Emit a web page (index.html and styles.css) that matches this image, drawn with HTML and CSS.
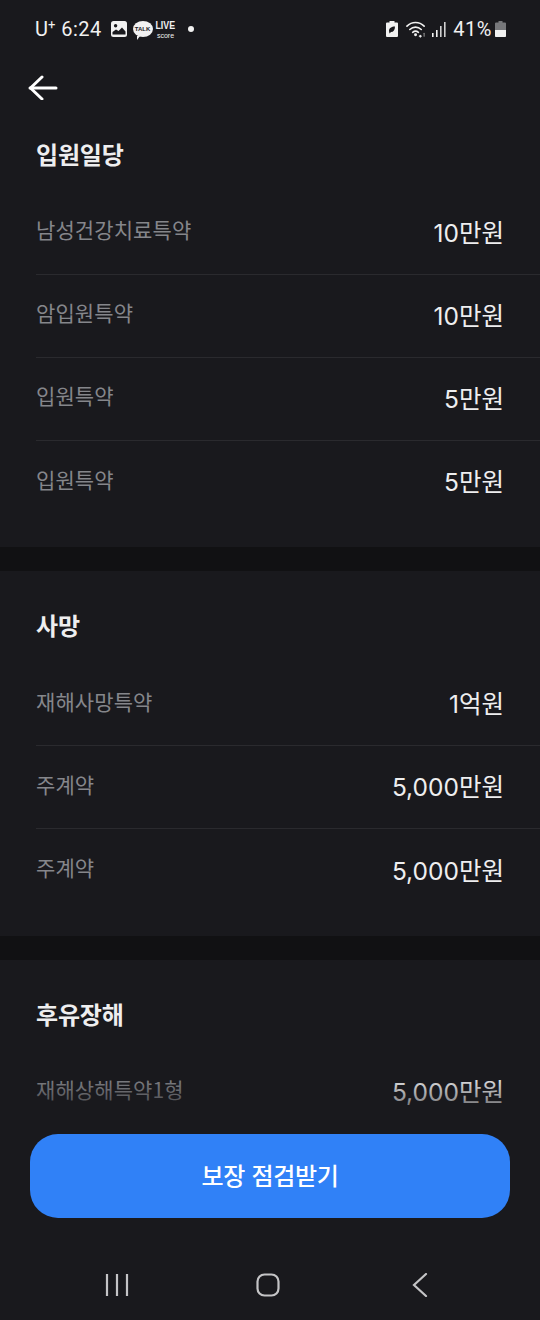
FILE: index.html
```html
<!DOCTYPE html>
<html lang="ko">
<head>
<meta charset="utf-8">
<title>보장 내역</title>
<link rel="stylesheet" href="styles.css">
</head>
<body>
<div class="phone">
  <header class="status">
    <div class="status-left">
      <span class="carrier">U<sup>+</sup></span>
      <span class="time">6:24</span>
      <svg class="ic-gallery" viewBox="0 0 16 16"><rect x="0" y="0" width="16" height="16" rx="2.5" fill="#f1f1f1"/><circle cx="4.6" cy="4.8" r="1.7" fill="#19191d"/><path d="M1.5 13.5V11l3.5-2.5 2.5 1.5L11 6.5l3.5 4v3z" fill="#19191d"/></svg>
      <span class="talk">TALK</span>
      <span class="live"><b>LIVE</b><i>score</i></span>
      <span class="dot"></span>
    </div>
    <div class="status-right">
      <svg class="ic-saver" viewBox="0 0 12 16"><path d="M3.5 0h5v1.5H11a1 1 0 0 1 1 1V15a1 1 0 0 1-1 1H1a1 1 0 0 1-1-1V2.500a1 1 0 0 1 1-1h2.500z" fill="#f1f1f1"/><path d="M3 10c0-3 2.500-4.500 6-4.500 0 3.500-1.500 5.500-4 5.500L3.500 12.500z" fill="#19191d"/></svg>
      <svg class="ic-wifi" viewBox="0 0 22 18" fill="none" stroke="#f1f1f1" stroke-width="1.700" stroke-linecap="round"><path d="M1 6c5-5 13-5 18 0"/><path d="M4 9.500c3.500-3.300 8.500-3.300 12 0"/><path d="M7 12.500c2-1.700 4-1.700 6 0"/><circle cx="10" cy="15" r=".7" fill="#f1f1f1"/><path d="M15 15.500v2M14 16.500h2" stroke-width="1.200"/><path d="M19 13.500v3" stroke="#888" stroke-width="1.200"/></svg>
      <svg class="ic-signal" viewBox="0 0 14 15"><rect x="0" y="11" width="1.600" height="4" fill="#f1f1f1"/><rect x="4" y="8" width="1.600" height="7" fill="#f1f1f1"/><rect x="8" y="4" width="1.600" height="11" fill="#d0d0d0"/><rect x="12" y="0" width="1.600" height="15" fill="#d0d0d0"/></svg>
      <span class="pct">41%</span>
      <svg class="ic-batt" viewBox="0 0 11 16"><path d="M3.500 0h4v1.500H10a1 1 0 0 1 1 1V15a1 1 0 0 1-1 1H1a1 1 0 0 1-1-1V2.500a1 1 0 0 1 1-1h2.500z" fill="#77787b"/><path d="M0 9h11v6a1 1 0 0 1-1 1H1a1 1 0 0 1-1-1z" fill="#f1f1f1"/></svg>
    </div>
  </header>

  <nav class="topbar">
    <svg class="ic-back" viewBox="0 0 30 26" fill="none" stroke="#fff" stroke-width="3" stroke-linecap="round" stroke-linejoin="round"><path d="M2 13h26"/><path d="M14 2 2.500 13 14 24"/></svg>
  </nav>

  <main class="content">
    <section class="group">
      <h2 class="group-title">입원일당</h2>
      <div class="row"><span class="label">남성건강치료특약</span><span class="value">10만원</span></div>
      <div class="row"><span class="label">암입원특약</span><span class="value">10만원</span></div>
      <div class="row"><span class="label">입원특약</span><span class="value">5만원</span></div>
      <div class="row"><span class="label">입원특약</span><span class="value">5만원</span></div>
    </section>
    <section class="group group-mid">
      <h2 class="group-title">사망</h2>
      <div class="row"><span class="label">재해사망특약</span><span class="value">1억원</span></div>
      <div class="row"><span class="label">주계약</span><span class="value">5,000만원</span></div>
      <div class="row"><span class="label">주계약</span><span class="value">5,000만원</span></div>
    </section>
    <section class="group group-last">
      <h2 class="group-title">후유장해</h2>
      <div class="row"><span class="label">재해상해특약1형</span><span class="value">5,000만원</span></div>
    </section>
  </main>

  <footer class="bottom">
    <button class="cta" type="button">보장 점검받기</button>
    <div class="softkeys">
      <svg class="key-recent" viewBox="0 0 24 24" fill="none" stroke="#c4c4c6" stroke-width="2.200"><path d="M2 1v22M12 1v22M22 1v22"/></svg>
      <svg class="key-home" viewBox="0 0 24 24" fill="none" stroke="#c4c4c6" stroke-width="2.200"><rect x="1.500" y="1.500" width="21" height="21" rx="7"/></svg>
      <svg class="key-back" viewBox="0 0 16 24" fill="none" stroke="#c4c4c6" stroke-width="2.200" stroke-linecap="round"><path d="M14 1 2 12l12 11"/></svg>
    </div>
  </footer>
</div>
</body>
</html>
```
FILE: styles.css
```css
* { box-sizing: border-box; }
html, body { margin: 0; padding: 0; }
body {
  background: #19191d;
  font-family: "Noto Sans CJK KR", "Inter", sans-serif;
  color: #fff;
}
.phone {
  position: relative;
  width: 540px;
  height: 1320px;
  overflow: hidden;
  background: #111113;
}

/* status bar */
.status {
  height: 60px;
  background: #19191d;
  display: flex;
  justify-content: space-between;
  align-items: center;
  padding: 0 34px 2px 35px;
  color: #f1f1f1;
  font-family: "Roboto", sans-serif;
  font-size: 20px;
}
.status-left, .status-right { display: flex; align-items: center; }
.carrier { font-size: 20px; line-height: 1; }
.carrier sup { font-size: 13px; line-height: 0; vertical-align: 7px; }
.time { margin-left: 6px; letter-spacing: .4px; }
.ic-gallery { width: 16px; height: 16px; margin-left: 9px; }
.talk {
  position: relative;
  margin-left: 6px;
  width: 20px;
  height: 16px;
  border-radius: 50%;
  background: #f1f1f1;
  color: #19191d;
  font: 700 6px/16px "Liberation Sans", sans-serif;
  text-align: center;
}
.talk::after {
  content: "";
  position: absolute;
  left: 4px;
  bottom: -3px;
  border-left: 3px solid #f1f1f1;
  border-bottom: 4px solid transparent;
}
.live {
  margin-left: 3px;
  width: 20px;
  display: flex;
  flex-direction: column;
  align-items: center;
  font-family: "Liberation Sans", sans-serif;
  line-height: 1;
}
.live b { font-size: 11px; height: 13px; line-height: 13px; transform: scaleX(.8); }
.live i { font-size: 7px; font-style: normal; height: 8px; line-height: 8px; }
.dot { width: 6px; height: 6px; border-radius: 50%; background: #f1f1f1; margin-left: 12px; }
.ic-saver { width: 12px; height: 16px; }
.ic-wifi { width: 21px; height: 18px; margin-left: 8px; }
.ic-signal { width: 14px; height: 15px; margin-left: 5px; }
.pct { margin-left: 7px; letter-spacing: .5px; }
.ic-batt { width: 11px; height: 16px; margin-left: 3px; }

/* top bar */
.topbar {
  height: 40px;
  background: #19191d;
  padding: 15px 0 0 28px;
}
.ic-back { display: block; width: 30px; height: 26px; }

/* sections */
.content { display: flex; flex-direction: column; gap: 24px; }
.group { background: #19191d; padding: 36px 0 23px 36px; }
.group-mid { padding-bottom: 24px; }
.group-title {
  margin: 0 0 18px;
  height: 38px;
  font-size: 24px;
  font-weight: 700;
  line-height: 35px;
  letter-spacing: -.2px;
  color: #eeeeef;
}
.row {
  height: 83px;
  display: flex;
  justify-content: space-between;
  align-items: center;
  padding: 0 36px 4px 0;
  border-bottom: 1px solid #2a2a2e;
}
.row:last-child { border-bottom: 0; }
.group-mid .row { padding-bottom: 3px; }
.group-last .row { padding-bottom: 6px; }
.label { font-size: 21px; letter-spacing: .1px; color: #85868b; position: relative; top: -2px; }
.value { font-family: "Inter", "Noto Sans CJK KR", sans-serif; font-size: 24.5px; color: #eeeeef; }

/* bottom CTA */
.bottom {
  position: absolute;
  left: 0;
  right: 0;
  top: 1074px;
  height: 246px;
  padding: 60px 30px 0;
  background: linear-gradient(to bottom, rgba(25,25,29,0) 0, #19191d 60px);
}
.cta {
  display: block;
  width: 100%;
  height: 84px;
  border: 0;
  border-radius: 28px;
  background: #3081f7;
  color: #fff;
  font-family: inherit;
  font-size: 24px;
  font-weight: 500;
  letter-spacing: -.3px;
  padding-bottom: 4px;
}
.softkeys { position: relative; height: 102px; }
.key-recent { position: absolute; left: 75px; top: 55px; width: 24px; height: 24px; }
.key-home { position: absolute; left: 226px; top: 55px; width: 24px; height: 24px; }
.key-back { position: absolute; left: 382px; top: 55px; width: 16px; height: 24px; }
```
